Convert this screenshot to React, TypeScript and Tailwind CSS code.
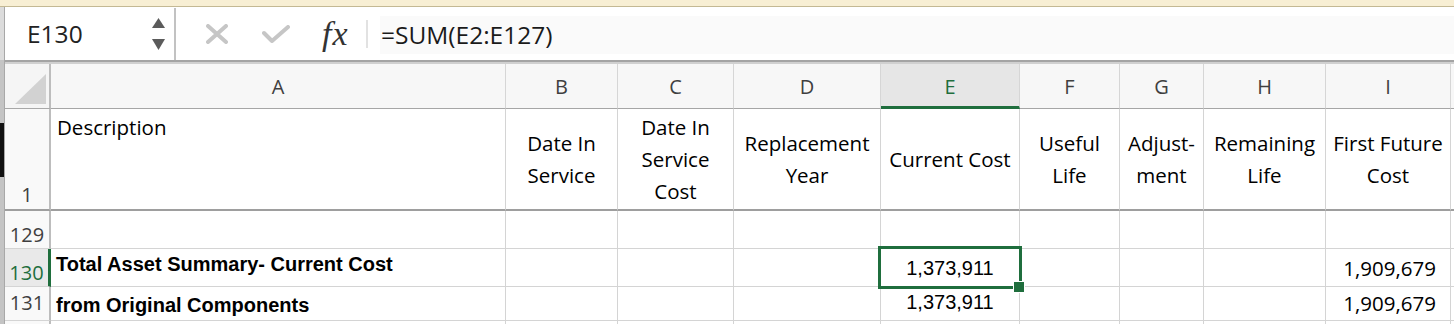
import React from 'react';

type Col = { id: string; w: string };

const COLS: Col[] = [
  { id: 'A', w: 'w-[455px]' },
  { id: 'B', w: 'w-[112px]' },
  { id: 'C', w: 'w-[116px]' },
  { id: 'D', w: 'w-[147px]' },
  { id: 'E', w: 'w-[139px]' },
  { id: 'F', w: 'w-[100px]' },
  { id: 'G', w: 'w-[84px]' },
  { id: 'H', w: 'w-[122px]' },
  { id: 'I', w: 'w-[125px]' },
  { id: '', w: 'w-[60px]' },
];

// header texts of row 1, one entry per line
const TITLES: Record<string, string[]> = {
  B: ['Date In', 'Service'],
  C: ['Date In', 'Service', 'Cost'],
  D: ['Replacement', 'Year'],
  E: ['Current Cost'],
  F: ['Useful', 'Life'],
  G: ['Adjust-', 'ment'],
  H: ['Remaining', 'Life'],
  I: ['First Future', 'Cost'],
};

function LeftStrip() {
  return (
    <div className="flex w-[5px] shrink-0 flex-col border-r border-[#a8a8a8]">
      <div className="h-[53px] bg-[#dcdcdc]" />
      <div className="h-[63px] bg-[#c4c4c4]" />
      <div className="h-[54px] bg-[#111]" />
      <div className="flex-1 bg-[#c4c4c4]" />
    </div>
  );
}

function FormulaBar() {
  return (
    <div className="flex h-[53px]">
      <div className="mt-[1px] flex w-[171px] items-center border-r-2 border-[#c2c2c2] pl-[22px] text-[24.5px] text-[#222]">
        <span>E130</span>
        <svg className="ml-auto mr-[8px]" width="14" height="34" viewBox="0 0 14 34">
          <polygon points="0,11 13,11 6.5,1" fill="#5b5b5b" />
          <polygon points="0,22 13,22 6.5,33" fill="#5b5b5b" />
        </svg>
      </div>
      <div className="flex flex-1 items-center">
        <svg className="ml-[30px]" width="22" height="20" viewBox="0 0 22 20">
          <path d="M2 2 L20 18 M20 2 L2 18" stroke="#c6c6c6" strokeWidth="4" strokeLinecap="round" fill="none" />
        </svg>
        <svg className="ml-[34px]" width="28" height="18" viewBox="0 0 28 18">
          <path d="M2 8 L10 16 L26 2" stroke="#c6c6c6" strokeWidth="4" strokeLinecap="round" strokeLinejoin="round" fill="none" />
        </svg>
        <div className="ml-[32px] w-[28px] font-['Liberation_Serif',serif] text-[34px] leading-none italic tracking-[1px] text-[#333]">
          fx
        </div>
        <div className="ml-[16px] h-[28px] w-[2px] bg-[#e2e2e2]" />
        <div className="mb-[6px] ml-[12px] mt-[9px] flex flex-1 items-center self-stretch bg-[#fafafa] pl-[1px] text-[24.5px] text-[#1a1a1a]">
          =SUM(E2:E127)
        </div>
      </div>
    </div>
  );
}

function HeaderRow() {
  return (
    <div className="flex h-[45px]">
      <div className="flex w-[46px] shrink-0 items-end justify-end border-b border-r-2 border-[#a8a8a8] border-r-[#bdbdbd] bg-[#f5f5f5] pb-[4px] pr-[3px]">
        <svg width="31" height="30" viewBox="0 0 31 30">
          <polygon points="0,30 31,30 31,0" fill="#d2d2d2" />
        </svg>
      </div>
      {COLS.map(c =>
        c.id === 'E' ? (
          <div
            key={c.id}
            className={`${c.w} shrink-0 border-b-[3px] border-r border-b-[#1f6e3d] border-r-[#d6d6d6] bg-[#e6e6e6] pt-[9px] text-center text-[20px] leading-[28px] text-[#1f6e3d]`}
          >
            {c.id}
          </div>
        ) : (
          <div
            key={c.id || 'J'}
            className={`${c.w} shrink-0 border-b border-r border-b-[#a6a6a6] border-r-[#d6d6d6] bg-[#f7f7f7] pt-[9px] text-center text-[20px] leading-[28px] text-[#3f3f3f]`}
          >
            {c.id}
          </div>
        )
      )}
    </div>
  );
}

function TitleRow() {
  return (
    <div className="flex h-[102px]">
      <div className="flex w-[46px] shrink-0 items-end justify-center border-b-2 border-r-2 border-b-[#9e9e9e] border-r-[#bdbdbd] bg-[#f9f9f9] text-[20px] leading-[28px] text-[#3f3f3f]">
        1
      </div>
      {COLS.map(c => {
        if (c.id === 'A') {
          return (
            <div key="A" className={`${c.w} shrink-0 border-b-2 border-r border-b-[#9e9e9e] border-r-[#d4d4d4] pl-[6px] pt-[2px] text-[20.5px] leading-[32px] text-black`}>
              Description
            </div>
          );
        }
        const lines = TITLES[c.id] || [];
        return (
          <div
            key={c.id || 'J'}
            className={`${c.w} flex shrink-0 flex-col items-center justify-center border-b-2 border-r border-b-[#9e9e9e] border-r-[#d4d4d4] text-center text-[20.5px] leading-[32px] whitespace-nowrap text-black`}
          >
            {lines.map(l => (
              <div key={l}>{l}</div>
            ))}
          </div>
        );
      })}
    </div>
  );
}

interface RowProps {
  num: string;
  h: string;
  numPad: string;
  active?: boolean;
  cells?: Record<string, React.ReactNode>;
}

function DataRow({ num, h, numPad, active, cells = {} }: RowProps) {
  return (
    <div className={`flex ${h}`}>
      <div
        className={
          active
            ? `w-[46px] shrink-0 border-b border-r-[3px] border-b-[#d4d4d4] border-r-[#1f6e3d] bg-[#e9e9e9] ${numPad} text-center text-[20px] leading-[28px] text-[#1f6e3d]`
            : `w-[46px] shrink-0 border-b border-r-2 border-b-[#d4d4d4] border-r-[#bdbdbd] bg-[#f9f9f9] ${numPad} text-center text-[20px] leading-[28px] text-[#3f3f3f]`
        }
      >
        {num}
      </div>
      {COLS.map(c => (
        <div key={c.id || 'J'} className={`${c.w} shrink-0 border-b border-r border-[#d4d4d4]`}>
          {cells[c.id]}
        </div>
      ))}
    </div>
  );
}

export default function App() {
  return (
    <div className="relative h-[324px] w-[1454px] overflow-hidden bg-white font-['Open_Sans',sans-serif] text-[#111]">
      <div className="h-[7px] border-b border-[#c4b994] bg-[#f8efd4]" />
      <div className="flex">
        <LeftStrip />
        <div className="flex min-w-0 flex-1 flex-col">
          <FormulaBar />
          <div className="h-[2px] bg-[#a4a4a4]" />
          <div className="h-[2px] bg-[#d0d0d0]" />
          <HeaderRow />
          <TitleRow />
          <DataRow num="129" h="h-[38px]" numPad="pt-[10px]" />
          <DataRow
            num="130"
            h="h-[38px]"
            numPad="pt-[10px]"
            active
            cells={{
              A: (
                <div className="pl-[5px] pt-[3px] font-['Liberation_Sans',Arial,sans-serif] text-[20px] leading-[24px] font-bold whitespace-nowrap text-black">
                  Total Asset Summary- Current Cost
                </div>
              ),
              E: (
                <div className="pt-[7px] text-center font-['Liberation_Sans',Arial,sans-serif] text-[20px] leading-[24px] text-black">
                  1,373,911
                </div>
              ),
              I: <div className="pr-[14px] pt-[5px] text-right text-[20.5px] leading-[28px] text-black">1,909,679</div>,
            }}
          />
          <DataRow
            num="131"
            h="h-[34px]"
            numPad="pt-[2px]"
            cells={{
              A: (
                <div className="pl-[5px] pt-[6px] font-['Liberation_Sans',Arial,sans-serif] text-[20px] leading-[24px] font-bold whitespace-nowrap text-black">
                  from Original Components
                </div>
              ),
              E: (
                <div className="pt-[3px] text-center font-['Liberation_Sans',Arial,sans-serif] text-[20px] leading-[24px] text-black">
                  1,373,911
                </div>
              ),
              I: <div className="pr-[14px] pt-[2px] text-right text-[20.5px] leading-[28px] text-black">1,909,679</div>,
            }}
          />
          <DataRow num="" h="h-[34px]" numPad="pt-[1px]" />
        </div>
      </div>
      {/* active cell outline + fill handle */}
      <div className="absolute left-[878px] top-[246px] h-[43px] w-[144px] border-[3px] border-[#1f6e3d]" />
      <div className="absolute left-[1013px] top-[281px] h-[12px] w-[12px] border border-white bg-[#1f6e3d]" />
    </div>
  );
}
